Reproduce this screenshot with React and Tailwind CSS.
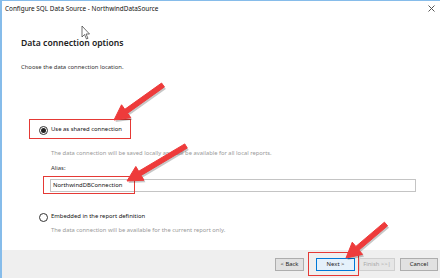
import React from "react";

function Radio({ checked }) {
  return (
    <span className="w-[9px] h-[9px] rounded-full border border-[#333] flex items-center justify-center bg-white shrink-0">
      {checked && <span className="w-[5px] h-[5px] rounded-full bg-[#222]" />}
    </span>
  );
}

function Arrow({ x1, y1, x2, y2 }) {
  const dx = x2 - x1, dy = y2 - y1;
  const len = Math.sqrt(dx * dx + dy * dy);
  const ux = dx / len, uy = dy / len;
  const px = -uy, py = ux;
  const hl = 15, hw = 8, sw = 2.4;
  const bx = x2 - ux * hl, by = y2 - uy * hl;
  const pts = [
    [x1 + px * sw, y1 + py * sw],
    [bx + px * sw, by + py * sw],
    [bx + px * hw, by + py * hw],
    [x2, y2],
    [bx - px * hw, by - py * hw],
    [bx - px * sw, by - py * sw],
    [x1 - px * sw, y1 - py * sw],
  ].map((p) => p.join(",")).join(" ");
  return (
    <g>
      <polygon points={pts} fill="rgba(0,0,0,0.22)" transform="translate(1.5,2)" />
      <polygon points={pts} fill="#ee3b3b" strokeLinejoin="round" stroke="#ee3b3b" strokeWidth="1" />
    </g>
  );
}

export default function App() {
  return (
    <div
      className="w-[440px] h-[278px] relative bg-white overflow-hidden flex flex-col border-l-2 border-t border-[#86bcea]"
      style={{ fontFamily: '"Noto Sans", "Open Sans", sans-serif' }}
    >
      <div className="h-[17px] flex items-center justify-between pl-[3px] pr-[5px] shrink-0">
        <span className="text-[6.4px] text-[#111] leading-none">Configure SQL Data Source - NorthwindDataSource</span>
        <svg width="7" height="7" viewBox="0 0 7 7" className="mt-[-2px]">
          <path d="M0.5 0.5 L6.5 6.5 M6.5 0.5 L0.5 6.5" stroke="#555" strokeWidth="1" />
        </svg>
      </div>
      <div className="flex-1 flex flex-col pl-[19px] pr-[24px]">
        <div className="mt-[19px] text-[8.6px] font-semibold text-[#222] leading-[12px]">Data connection options</div>
        <div className="mt-[14px] text-[5.9px] text-[#333] leading-[9px]">Choose the data connection location.</div>
        <div className="mt-[53px] ml-[18px] flex items-center gap-[3px] h-[10px]">
          <Radio checked />
          <span className="text-[5.9px] text-[#111] leading-none">Use as shared connection</span>
        </div>
        <div className="mt-[14px] ml-[30px] text-[5.8px] text-[#999] leading-[9px]">
          The data connection will be saved locally and will be available for all local reports.
        </div>
        <div className="mt-[6px] ml-[30px] text-[5.9px] text-[#333] leading-[9px]">Alias:</div>
        <div className="mt-[6px] ml-[29px] h-[13px] border border-[#c4c4c4] flex items-center px-[2px]">
          <span className="text-[5.9px] text-[#111] leading-none">NorthwindDBConnection</span>
        </div>
        <div className="mt-[20px] ml-[18px] flex items-center gap-[3px] h-[10px]">
          <Radio />
          <span className="text-[5.9px] text-[#111] leading-none">Embedded in the report definition</span>
        </div>
        <div className="mt-[4px] ml-[30px] text-[5.8px] text-[#999] leading-[9px]">
          The data connection will be available for the current report only.
        </div>
      </div>
      <div className="h-[28px] bg-[#efefef] flex items-center justify-end pr-[2px] shrink-0">
        <div className="flex items-center gap-[4px] pt-[1px]">
          <div className="w-[29px] h-[13px] bg-[#e1e1e1] border border-[#adadad] flex items-center justify-center text-[5.9px] text-[#222]">&lt; Back</div>
          <div className="ml-[8px] w-[39px] h-[13px] bg-[#e5f1fb] border border-[#0078d7] flex items-center justify-center text-[5.9px] text-[#222]">Next &gt;</div>
          <div className="w-[36px] h-[13px] bg-[#e6e6e6] border border-[#cfcfcf] flex items-center justify-center text-[5.9px] text-[#a8a8a8]">Finish &gt;&gt;|</div>
          <div className="ml-[1px] w-[38px] h-[13px] bg-[#e1e1e1] border border-[#adadad] flex items-center justify-center text-[5.9px] text-[#222]">Cancel</div>
        </div>
      </div>

      {/* annotation overlay */}
      <div className="absolute left-[27px] top-[118px] w-[102px] h-[20px] border-[1.5px] border-[#e53935]" />
      <div className="absolute left-[41px] top-[175px] w-[92px] h-[18px] border-[1.5px] border-[#e53935]" />
      <div className="absolute left-[306px] top-[251px] w-[51px] h-[24px] border-[1.5px] border-[#e53935]" />
      <svg className="absolute left-[-2px] top-[-1px] pointer-events-none" width="440" height="278">
        <Arrow x1={163} y1={85} x2={114} y2={120} />
        <Arrow x1={186} y1={146} x2={127} y2={181} />
        <Arrow x1={386} y1={224} x2={346} y2={258} />
        <path d="M82 26 L82 37 L84.5 34.5 L86.5 39 L88 38.3 L86 34 L89.5 34 Z" fill="white" stroke="#333" strokeWidth="0.7" />
      </svg>
    </div>
  );
}
